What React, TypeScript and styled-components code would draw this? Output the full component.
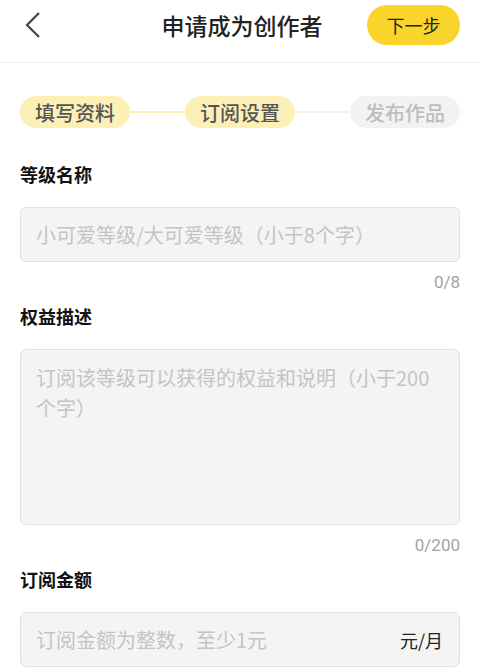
import React, { FunctionComponent } from 'react'
import styled, { createGlobalStyle } from 'styled-components'

const GlobalStyle = createGlobalStyle`
  html, body {
    margin: 0;
    padding: 0;
    background: #fff;
  }
  body {
    font-family: "Noto Sans CJK SC", "Noto Sans", sans-serif;
    color: #222;
  }
`

const Page = styled.div`
  width: 480px;
  min-height: 670px;
  background: #fff;
`

const Header = styled.div`
  box-sizing: border-box;
  height: 63px;
  display: grid;
  grid-template-columns: 1fr auto 1fr;
  align-items: center;
  padding: 0 20px 12px 24px;
  border-bottom: 1px solid #eeeeee;
`

const BackButton = styled.div`
  display: flex;
  align-items: center;
  justify-self: start;
`

const Title = styled.h1`
  margin: 0;
  font-size: 23px;
  font-weight: 500;
  line-height: 30px;
  color: #222;
`

const NextButton = styled.button`
  justify-self: end;
  width: 93px;
  height: 40px;
  border: none;
  border-radius: 20px;
  background: #f9d52c;
  color: #222;
  font-family: inherit;
  font-size: 18px;
  padding: 0;
`

const Body = styled.div`
  padding: 33px 20px 0;
`

const Steps = styled.div`
  display: flex;
  align-items: center;
`

const StepPill = styled.div<{ $state: 'done' | 'active' | 'todo' }>`
  height: 32px;
  width: 110px;
  flex: none;
  display: flex;
  align-items: center;
  justify-content: center;
  border-radius: 16px;
  font-size: 20px;
  font-weight: 500;
  background: ${(p) => (p.$state === 'todo' ? '#f2f2f2' : '#fcf0b7')};
  color: ${(p) => (p.$state === 'todo' ? '#bdbdbd' : '#555')};
`

const StepLine = styled.div<{ $done: boolean }>`
  flex: 1;
  height: 2px;
  background: ${(p) => (p.$done ? '#fbefb4' : '#f2f2f2')};
`

const Field = styled.div`
  display: flex;
  flex-direction: column;
`

const Label = styled.div<{ $first?: boolean }>`
  font-size: 18px;
  font-weight: 700;
  line-height: 24px;
  color: #111;
  margin-top: ${(p) => (p.$first ? '34px' : '12px')};
  margin-bottom: 21px;
`

const InputBox = styled.div<{ $tall?: boolean }>`
  box-sizing: border-box;
  height: ${(p) => (p.$tall ? '176px' : '55px')};
  background: #f4f4f4;
  border: 1px solid #e1e1e1;
  border-radius: 6px;
  padding: ${(p) => (p.$tall ? '13px 15px' : '0 15px')};
  display: flex;
  align-items: ${(p) => (p.$tall ? 'flex-start' : 'center')};
  justify-content: space-between;
`

const Placeholder = styled.div`
  font-size: 20px;
  line-height: 30px;
  color: #c4c4c4;
`

const Unit = styled.span`
  font-size: 18px;
  color: #222;
  flex: none;
  margin-right: 1px;
`

const Counter = styled.div`
  align-self: flex-end;
  font-family: Roboto, "Noto Sans", sans-serif;
  font-size: 17px;
  line-height: 20px;
  color: #a3a3a3;
  margin-top: 10px;
`

const ChevronLeft = () => (
  <svg width='18' height='28' viewBox='0 0 18 28' fill='none'>
    <path d='M15 2L3 14L15 26' stroke='#444' strokeWidth='2.2' />
  </svg>
)

const App: FunctionComponent = () => {
  return (
    <Page>
      <GlobalStyle />
      <Header>
        <BackButton>
          <ChevronLeft />
        </BackButton>
        <Title>申请成为创作者</Title>
        <NextButton>下一步</NextButton>
      </Header>
      <Body>
        <Steps>
          <StepPill $state='done'>填写资料</StepPill>
          <StepLine $done />
          <StepPill $state='active'>订阅设置</StepPill>
          <StepLine $done={false} />
          <StepPill $state='todo'>发布作品</StepPill>
        </Steps>

        <Field>
          <Label $first>等级名称</Label>
          <InputBox>
            <Placeholder>小可爱等级/大可爱等级（小于8个字）</Placeholder>
          </InputBox>
          <Counter>0/8</Counter>
        </Field>

        <Field>
          <Label>权益描述</Label>
          <InputBox $tall>
            <Placeholder>订阅该等级可以获得的权益和说明（小于200个字）</Placeholder>
          </InputBox>
          <Counter>0/200</Counter>
        </Field>

        <Field>
          <Label>订阅金额</Label>
          <InputBox>
            <Placeholder>订阅金额为整数，至少1元</Placeholder>
            <Unit>元/月</Unit>
          </InputBox>
        </Field>
      </Body>
    </Page>
  )
}

export default App
